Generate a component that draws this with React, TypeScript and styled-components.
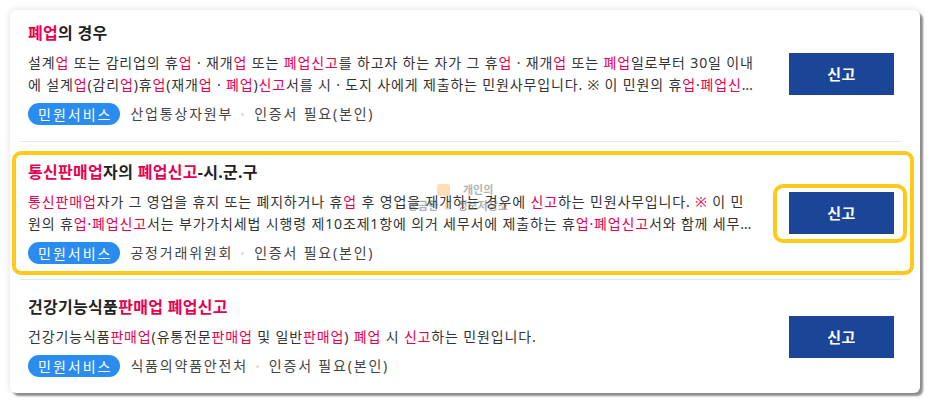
import React from 'react';
import styled, { createGlobalStyle } from 'styled-components';

const Global = createGlobalStyle`
  html, body { margin: 0; padding: 0; background: #fff; }
  body { font-family: "Noto Sans", "Noto Sans CJK KR", sans-serif; }
`;

const Page = styled.div`
  width: 933px;
  height: 406px;
  padding: 10px 0 0 10px;
  box-sizing: border-box;
`;

const Card = styled.div`
  position: relative;
  width: 910px;
  box-sizing: border-box;
  padding: 0 19px 0 10px;
  background: #fff;
  border-radius: 6px;
  box-shadow: 3px 3px 2px rgba(0, 0, 0, 0.42), 0 0 6px rgba(0, 0, 0, 0.14);
`;

const Row = styled.div<{ $pt: number; $pb: number; $last?: boolean }>`
  position: relative;
  display: flex;
  align-items: center;
  gap: 32px;
  padding: ${(p) => p.$pt}px 7px ${(p) => p.$pb}px 8px;
  border-bottom: ${(p) => (p.$last ? 'none' : '1px solid #e8e8e8')};
`;

const Body = styled.div`
  flex: 0 0 729px;
  min-width: 0;
`;

const Title = styled.div`
  font-size: 16px;
  font-weight: 700;
  letter-spacing: 0.3px;
  line-height: 22px;
  color: #222;
  margin-bottom: 8px;
`;

const Desc = styled.div`
  font-size: 14px;
  letter-spacing: 0.85px;
  line-height: 22px;
  color: #333;
  word-break: break-all;
  display: -webkit-box;
  -webkit-line-clamp: 2;
  -webkit-box-orient: vertical;
  overflow: hidden;
  margin-bottom: 7px;
`;

const Mark = styled.span`
  color: #e8004f;
`;

const Tags = styled.div`
  display: flex;
  align-items: center;
  height: 22px;
`;

const Pill = styled.span`
  display: inline-flex;
  align-items: center;
  height: 22px;
  padding: 0 8px 0 10px;
  border-radius: 11px;
  background: #2a8cef;
  color: #fff;
  font-size: 14px;
  letter-spacing: 2px;
  margin-right: 10px;
`;

const Meta = styled.span`
  font-size: 14px;
  letter-spacing: 1.8px;
  color: #444;
  line-height: 22px;
`;

const Dot = styled.span`
  width: 3px;
  height: 3px;
  border-radius: 50%;
  background: #dcdcdc;
  margin: 0 10px 0 8px;
`;

const ButtonWrap = styled.div`
  position: relative;
  flex: 0 0 auto;
`;

const ReportButton = styled.button`
  display: block;
  width: 105px;
  height: 42px;
  border: none;
  background: #1b4596;
  color: #fff;
  font-family: inherit;
  font-size: 15px;
  font-weight: 700;
  letter-spacing: 0.5px;
  cursor: pointer;
`;

const RowHighlight = styled.div`
  position: absolute;
  left: -8px;
  right: -13px;
  top: 9px;
  bottom: 4px;
  border: 4px solid #ffc91a;
  border-radius: 9px;
  pointer-events: none;
`;

const ButtonHighlight = styled.div`
  position: absolute;
  left: -16px;
  right: -13px;
  top: -8px;
  bottom: -9px;
  border: 4px solid #ffc91a;
  border-radius: 10px;
  pointer-events: none;
`;

const Watermark = styled.div`
  position: absolute;
  left: 398px;
  top: 173px;
  display: flex;
  flex-direction: column;
  gap: 3px;
  pointer-events: none;
  font-family: "Noto Sans CJK KR", sans-serif;
  font-size: 11px;
  line-height: 13px;
  font-weight: 700;
  color: rgba(100, 100, 100, 0.5);
  white-space: nowrap;
`;

const WmLine = styled.div<{ $indent: number; $gap: number }>`
  display: flex;
  align-items: center;
  gap: ${(p) => p.$gap}px;
  padding-left: ${(p) => p.$indent}px;
`;

const WmBlock = styled.span<{ $w: number; $h: number }>`
  width: ${(p) => p.$w}px;
  height: ${(p) => p.$h}px;
  border-radius: 2px;
  background: rgba(255, 170, 70, 0.4);
`;

function Hl({ text }: { text: string }) {
  const parts = text.split(/(\[[^\]]+\])/g);
  return (
    <>
      {parts.map((p, i) =>
        p.startsWith('[') ? <Mark key={i}>{p.slice(1, -1)}</Mark> : <React.Fragment key={i}>{p}</React.Fragment>
      )}
    </>
  );
}

type Item = {
  title: string;
  desc: string;
  org: string;
  pt: number;
  pb: number;
  highlight?: boolean;
};

const items: Item[] = [
  {
    title: '[폐업]의 경우',
    desc:
      '설계[업] 또는 감리업의 휴[업] · 재개[업] 또는 [폐업신고]를 하고자 하는 자가 그 휴[업] · 재개[업] 또는 [폐업]일로부터 30일 이내에 설계[업](감리[업])휴[업](재개[업] · [폐업])[신고]서를 시 · 도지 사에게 제출하는 민원사무입니다. ※ 이 민원의 휴[업]·[폐업신고]서는 부가가치세법 시행령에 따라 세무서에 제출할 수 있습니다.',
    org: '산업통상자원부',
    pt: 12,
    pb: 16,
  },
  {
    title: '[통신판매업]자의 [폐업신고]-시.군.구',
    desc:
      '[통신판매업]자가 그 영업을 휴지 또는 폐지하거나 휴[업] 후 영업을 재개하는 경우에 [신고]하는 민원사무입니다. [※] 이 민원의 휴[업]·[폐업신고]서는 부가가치세법 시행령 제10조제1항에 의거 세무서에 제출하는 휴[업·폐업신고]서와 함께 세무서에 제출할 수 있습니다.',
    org: '공정거래위원회',
    pt: 19,
    pb: 15,
    highlight: true,
  },
  {
    title: '건강기능식품[판매업 폐업신고]',
    desc: '건강기능식품[판매업](유통전문[판매업] 및 일반[판매업]) [폐업] 시 [신고]하는 민원입니다.',
    org: '식품의약품안전처',
    pt: 16,
    pb: 16,
  },
];

export default function App() {
  return (
    <Page>
      <Global />
      <Card>
        {items.map((it, i) => (
          <Row key={i} $pt={it.pt} $pb={it.pb} $last={i === items.length - 1}>
            {it.highlight && <RowHighlight />}
            <Body>
              <Title>
                <Hl text={it.title} />
              </Title>
              <Desc>
                <Hl text={it.desc} />
              </Desc>
              <Tags>
                <Pill>민원서비스</Pill>
                <Meta>{it.org}</Meta>
                <Dot />
                <Meta>인증서 필요(본인)</Meta>
              </Tags>
            </Body>
            <ButtonWrap>
              <ReportButton>신고</ReportButton>
              {it.highlight && <ButtonHighlight />}
            </ButtonWrap>
          </Row>
        ))}
        <Watermark>
          <WmLine $indent={29} $gap={13}>
            <WmBlock $w={13} $h={12} />
            <span>개인의</span>
          </WmLine>
          <WmLine $indent={0} $gap={7}>
            <span>궁금한</span>
            <WmBlock $w={5} $h={8} />
            <span>정보저장소</span>
          </WmLine>
        </Watermark>
      </Card>
    </Page>
  );
}
